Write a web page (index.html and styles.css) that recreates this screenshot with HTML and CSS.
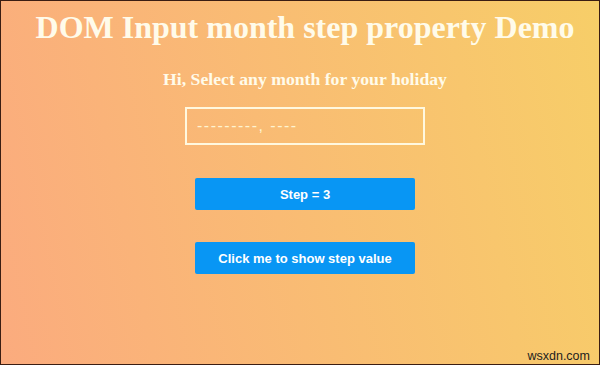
FILE: index.html
```html
<!DOCTYPE html>
<html>
	<head>
		<meta charset="UTF-8">
		<title>DOM Input month step property Demo</title>
		<link rel="stylesheet" href="styles.css">
	</head>
	<body>
		<div id="frame">
			<div id="demo">
				<h1>DOM Input month step property Demo</h1>
				<p class="intro">Hi, Select any month for your holiday</p>
				<input type="text" class="month" placeholder="---------, ----">
				<button class="btn btn-step">Step = 3</button>
				<button class="btn btn-show">Click me to show step value</button>
			</div>
			<span class="mark">wsxdn.com</span>
		</div>
	</body>
</html>
```

FILE: styles.css
```css
html,
body {
	margin: 0;
	width: 100%;
	height: 100%;
}

#frame {
	width: 600px;
	height: 365px;
	box-sizing: border-box;
	border: 1px solid #3b1d12;
	background: linear-gradient(78deg, #fbab7e, #f7ce68);
	position: relative;
	overflow: hidden;
}

#demo {
	display: flex;
	flex-direction: column;
	align-items: center;
	padding-left: 10px;
	padding-top: 8px;
	font-family: "Liberation Serif", "Times New Roman", serif;
	color: #fffbea;
}

h1 {
	margin: 0;
	font-size: 32px;
	line-height: 37px;
	font-weight: bold;
}

.intro {
	margin: 23px 0 0;
	font-size: 17.7px;
	line-height: 20px;
	font-weight: bold;
}

.month {
	margin-top: 18px;
	width: 240px;
	height: 38px;
	box-sizing: border-box;
	border: 2px solid #fff8df;
	background: transparent;
	padding: 0 10px;
	font: 16px "Liberation Sans", Arial, sans-serif;
	color: #fff8df;
	outline: none;
}

.month::placeholder {
	color: #fff3d0;
	letter-spacing: 1.5px;
}

.btn {
	width: 220px;
	height: 32px;
	border: none;
	border-radius: 2px;
	background-color: #0896f4;
	color: #ffffff;
	font: bold 13px "Liberation Sans", Arial, sans-serif;
	cursor: pointer;
}

.btn-step {
	margin-top: 33px;
}

.btn-show {
	margin-top: 32px;
}

.mark {
	position: absolute;
	right: 9px;
	bottom: 1px;
	font: 12.5px "Liberation Sans", Arial, sans-serif;
	color: #1e1e1e;
}
```
